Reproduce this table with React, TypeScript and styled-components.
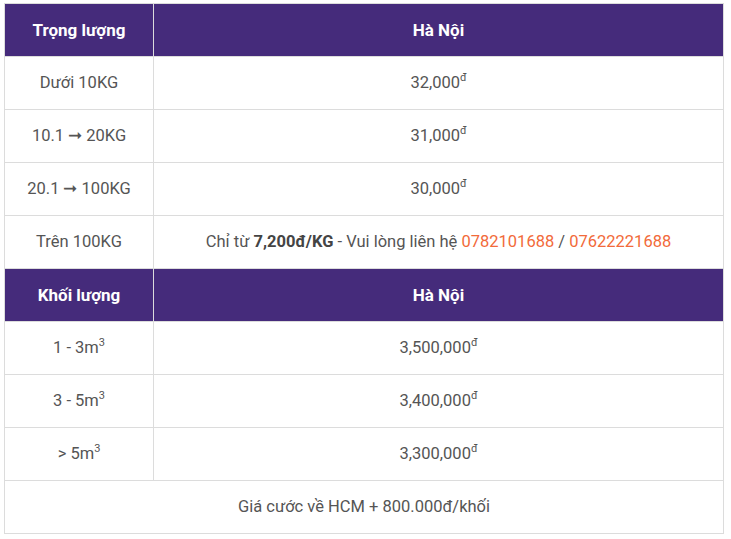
import React from "react";
import styled, { createGlobalStyle } from "styled-components";

const Global = createGlobalStyle`
  html, body { margin: 0; padding: 0; background: #fff; }
  body { font-family: Roboto, "Liberation Sans", Arial, sans-serif; }
`;

const Wrap = styled.div`
  padding: 3px 7px 0 4px;
`;

const Table = styled.table`
  width: 720px;
  border-collapse: collapse;
  table-layout: fixed;
  font-family: Roboto, "Liberation Sans", Arial, sans-serif;
  font-size: 16.5px;
  color: #555;
`;

const Th = styled.th<{ $w?: number }>`
  background: #452b7b;
  color: #fff;
  font-weight: 700;
  font-size: 17px;
  height: 52px;
  padding: 0 8px;
  border: 1px solid #dcdcdc;
  text-align: center;
  vertical-align: middle;
  ${(p) => (p.$w ? `width: ${p.$w}px;` : "")}
`;

const Td = styled.td`
  height: 52px;
  padding: 0 8px;
  border: 1px solid #dcdcdc;
  text-align: center;
  vertical-align: middle;
  line-height: 20px;
`;

const Sup = styled.sup`
  font-size: 11px;
  line-height: 0;
  vertical-align: 0;
  position: relative;
  top: -0.6em;
`;

const Strong = styled.strong`
  font-weight: 700;
  color: #444;
`;

const Phone = styled.span`
  color: #f26a3a;
`;

const Price = ({ v }: { v: string }) => (
  <>
    {v}
    <Sup>đ</Sup>
  </>
);

const Vol = ({ v }: { v: string }) => (
  <>
    {v}m<Sup>3</Sup>
  </>
);

export default function App() {
  return (
    <>
      <Global />
      <Wrap>
        <Table>
          <tbody>
            <tr>
              <Th $w={132}>Trọng lượng</Th>
              <Th>Hà Nội</Th>
            </tr>
            <tr>
              <Td>Dưới 10KG</Td>
              <Td>
                <Price v="32,000" />
              </Td>
            </tr>
            <tr>
              <Td>10.1 ➞ 20KG</Td>
              <Td>
                <Price v="31,000" />
              </Td>
            </tr>
            <tr>
              <Td>20.1 ➞ 100KG</Td>
              <Td>
                <Price v="30,000" />
              </Td>
            </tr>
            <tr>
              <Td>Trên 100KG</Td>
              <Td>
                Chỉ từ <Strong>7,200đ/KG</Strong> - Vui lòng liên hệ{" "}
                <Phone>0782101688</Phone> / <Phone>07622221688</Phone>
              </Td>
            </tr>
            <tr>
              <Th>Khối lượng</Th>
              <Th>Hà Nội</Th>
            </tr>
            <tr>
              <Td>
                <Vol v="1 - 3" />
              </Td>
              <Td>
                <Price v="3,500,000" />
              </Td>
            </tr>
            <tr>
              <Td>
                <Vol v="3 - 5" />
              </Td>
              <Td>
                <Price v="3,400,000" />
              </Td>
            </tr>
            <tr>
              <Td>
                <Vol v="> 5" />
              </Td>
              <Td>
                <Price v="3,300,000" />
              </Td>
            </tr>
            <tr>
              <Td colSpan={2}>Giá cước về HCM + 800.000đ/khối</Td>
            </tr>
          </tbody>
        </Table>
      </Wrap>
    </>
  );
}
